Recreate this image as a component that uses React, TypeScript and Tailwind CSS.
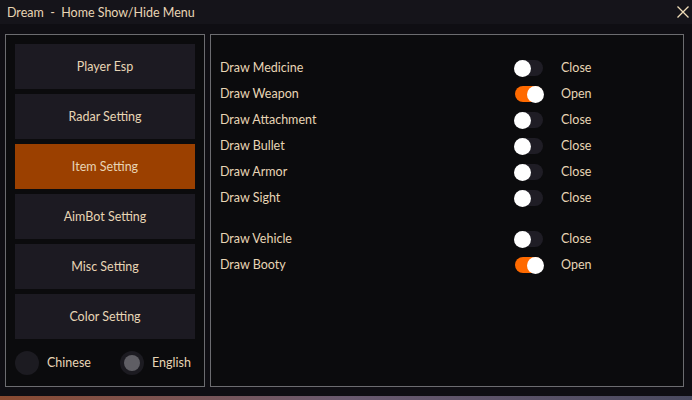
import React from "react";

const menu = ["Player Esp", "Radar Setting", "Item Setting", "AimBot Setting", "Misc Setting", "Color Setting"];

const rows1: [string, boolean][] = [
  ["Draw Medicine", false],
  ["Draw Weapon", true],
  ["Draw Attachment", false],
  ["Draw Bullet", false],
  ["Draw Armor", false],
  ["Draw Sight", false],
];
const rows2: [string, boolean][] = [
  ["Draw Vehicle", false],
  ["Draw Booty", true],
];

function Toggle({ on }: { on: boolean }) {
  return (
    <div className={"relative w-[28px] h-[16px] rounded-full " + (on ? "bg-[#ff6a00]" : "bg-[#1f1d25]")}>
      <div
        className={"absolute top-[-0.5px] w-[17px] h-[17px] rounded-full bg-white " + (on ? "right-[-1px]" : "left-[-1px]")}
      />
    </div>
  );
}

function Row({ label, on }: { label: string; on: boolean }) {
  return (
    <div className="flex items-center h-[26px]">
      <div className="w-[295px]">{label}</div>
      <Toggle on={on} />
      <div className="ml-[18px]">{on ? "Open" : "Close"}</div>
    </div>
  );
}

export default function App() {
  return (
    <div
      className="w-[692px] h-[400px] bg-[#0f0e13] text-[#e8d5b5] text-[12.5px] flex flex-col overflow-hidden"
      style={{ fontFamily: 'Lato, "Noto Sans", sans-serif' }}
    >
      <div className="h-[24px] bg-[#15141a] flex items-center justify-between pl-[7px] shrink-0">
        <div className="whitespace-pre pt-[2px] text-[12.5px]">Dream  -  Home Show/Hide Menu</div>
        <svg width="16" height="16" viewBox="0 0 16 16" className="mr-[1px]">
          <path d="M2.5 2.5 L13.5 13.5 M13.5 2.5 L2.5 13.5" stroke="#f0ddb8" strokeWidth="1.3" />
        </svg>
      </div>
      <div className="flex gap-[5px] px-[5px] pt-[10px] h-[363px] shrink-0">
        <div className="w-[200px] h-[353px] border border-[#6c6c70] bg-[#0b0b0d] px-[9px] pt-[9px] flex flex-col">
          <div className="flex flex-col gap-[5px]">
            {menu.map((m) => (
              <div
                key={m}
                className={
                  "h-[45px] flex items-center justify-center pt-[1px] " +
                  (m === "Item Setting" ? "bg-[#9b4000]" : "bg-[#1c1a22]")
                }
              >
                {m}
              </div>
            ))}
          </div>
          <div className="flex items-center mt-[12px] h-[24px]">
            <div className="w-[24px] h-[24px] rounded-full bg-[#1c1b21]" />
            <div className="ml-[8px] w-[73px]">Chinese</div>
            <div className="w-[24px] h-[24px] rounded-full bg-[#1c1b21] flex items-center justify-center">
              <div className="w-[16px] h-[16px] rounded-full bg-[#5f5e64]" />
            </div>
            <div className="ml-[8px]">English</div>
          </div>
        </div>
        <div className="w-[474px] h-[353px] border border-[#6c6c70] bg-[#0b0b0d] pl-[9px] pt-[20px]">
          {rows1.map(([l, o]) => (
            <Row key={l} label={l} on={o} />
          ))}
          <div className="h-[15px]" />
          {rows2.map(([l, o]) => (
            <Row key={l} label={l} on={o} />
          ))}
        </div>
      </div>
      <div className="h-[9px] shrink-0" />
      <div className="h-[4px] shrink-0 bg-gradient-to-r from-[#8a4a30] via-[#6a5a70] to-[#4a4a60]" />
    </div>
  );
}
